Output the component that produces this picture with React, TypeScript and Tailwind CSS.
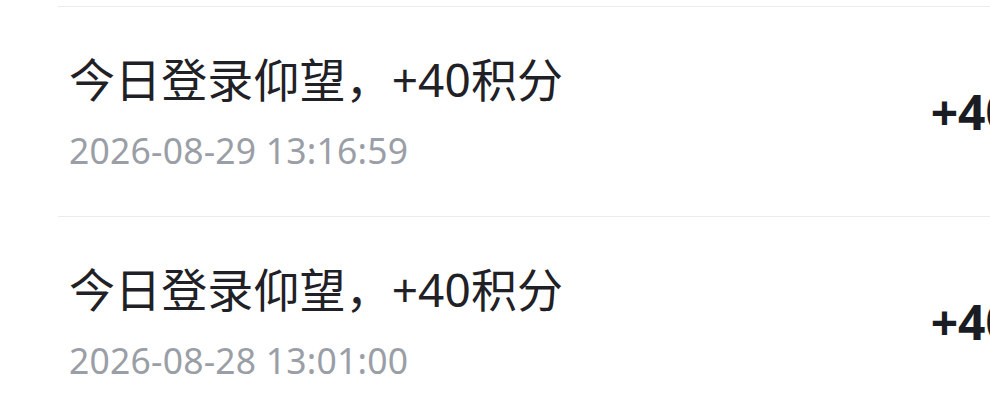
import React from 'react';

type Record = {
  title: string;
  time: string;
  amount: string;
};

const records: Record[] = [
  { title: '今日登录仰望，+40积分', time: '2026-08-29 13:16:59', amount: '+40' },
  { title: '今日登录仰望，+40积分', time: '2026-08-28 13:01:00', amount: '+40' },
];

const font = { fontFamily: '"Noto Sans", "Noto Sans CJK SC", sans-serif' };

const App: React.FC = () => {
  return (
    <div className="w-[990px] h-[404px] overflow-hidden bg-white" style={font}>
      {/* 积分明细列表 */}
      <ul className="ml-[58px] mt-[6px] w-[965px]">
        {records.map((r, i) => (
          <li
            key={i}
            className="h-[210px] border-t-[1.5px] border-[#ebecf0] pl-[11px] pr-[10px] flex items-center justify-between"
          >
            <div className="flex flex-col gap-[21px]">
              <span className="text-[46px] leading-[56px] tracking-[0.1px] text-[#1f2126]">{r.title}</span>
              <span className="text-[35.5px] leading-[44px] tracking-[0.2px] text-[#9a9ea6]">{r.time}</span>
            </div>
            <span className="text-[48px] leading-[56px] font-bold text-[#1a1c24]">{r.amount}</span>
          </li>
        ))}
      </ul>
    </div>
  );
};

export default App;
